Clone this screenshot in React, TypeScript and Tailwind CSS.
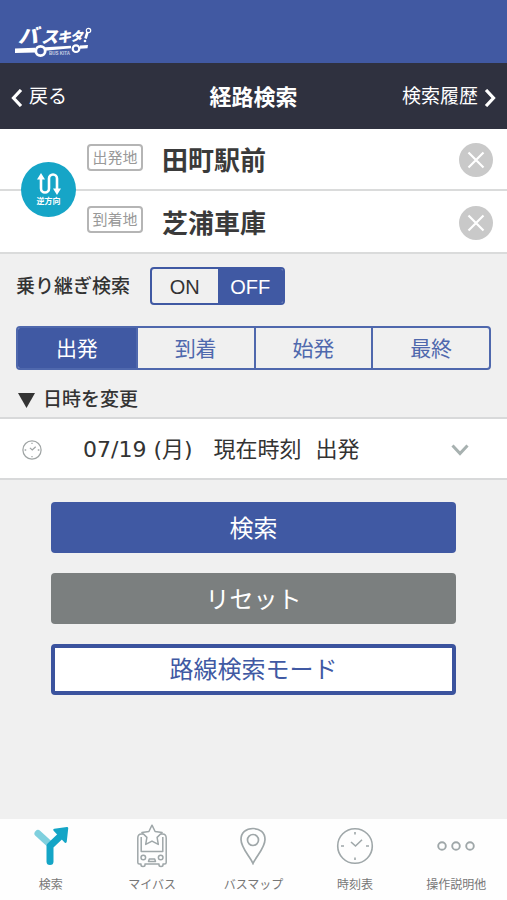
import { useState } from "react";
import type { ReactNode } from "react";

function Logo() {
  return (
    <svg width="78" height="48" viewBox="0 -14 78 48" className="text-white" role="img" aria-label="バスキタ! BUS KITA">
      <g fill="currentColor" fontStyle="italic" fontWeight="900" fontFamily="'Noto Sans CJK JP', sans-serif">
        <text x="3" y="14" fontSize="20">バ</text>
        <text x="26" y="14" fontSize="17">ス</text>
        <text x="42" y="13" fontSize="14">キ</text>
        <text x="55" y="12" fontSize="13">タ</text>
      </g>
      <path d="M70.500 9.500L72.500 3" stroke="currentColor" strokeWidth="2.600" />
      <circle cx="73.500" cy="1.500" r="2.200" fill="none" stroke="currentColor" strokeWidth="1.200" />
      <circle cx="70" cy="12" r="1.300" fill="currentColor" />
      <path d="M0 19.500l20-.8v4.800l-20 .4z M30 18.300l26-1.500v2.500l-26 2.400z M65 16.500l8-.5-.5 3.300-7.500.4z" fill="currentColor" />
      <circle cx="25.500" cy="22" r="4.700" fill="none" stroke="currentColor" strokeWidth="2.800" />
      <circle cx="61" cy="19.700" r="3.300" fill="none" stroke="currentColor" strokeWidth="2.200" />
      <text x="34" y="26" fontSize="4.500" fontWeight="700" fill="currentColor" opacity="0.700" fontFamily="'Liberation Sans', sans-serif">BUS KITA</text>
    </svg>
  );
}

function Chevron({ d }: { d: string }) {
  return (
    <svg width="12" height="18" viewBox="0 0 12 18" fill="none" stroke="currentColor" strokeWidth="3.200" aria-hidden="true">
      <path d={d} />
    </svg>
  );
}

function ClockFace({ size, stroke }: { size: number; stroke: number }) {
  return (
    <svg width={size} height={size} viewBox="0 0 38 38" fill="none" stroke="currentColor" strokeWidth={stroke} aria-hidden="true">
      <circle cx="19" cy="19" r="17.300" />
      <path d="M15 15l4.500 4 6.500-6.300M19 5v2.500M19 30.500V33M5 19h3M30 19h3" />
    </svg>
  );
}

function SearchIcon() {
  return (
    <svg width="36" height="40" viewBox="0 0 36 40" fill="none" aria-hidden="true">
      <path d="M5 7.500l11 10" stroke="#7fd0de" strokeWidth="7" strokeLinecap="round" />
      <path d="M17 35.500V20l10-9.500" stroke="#14a5c6" strokeWidth="7" strokeLinecap="round" strokeLinejoin="round" />
      <path d="M21.500 4l12.500-1.800-1.500 13.500z" fill="#14a5c6" stroke="#14a5c6" strokeWidth="2.500" strokeLinejoin="round" />
    </svg>
  );
}

function BusIcon() {
  return (
    <svg width="32" height="44" viewBox="0 0 32 44" fill="none" stroke="currentColor" strokeWidth="1.500" strokeLinejoin="round" aria-hidden="true">
      <path d="M8 10H5.500Q1.800 10 1.800 14v24.500q0 1.500 1.500 1.500H5v1q0 1.500 2 1.500t2-1.500v-1h14v1q0 1.500 2 1.500t2-1.500v-1h1.700q1.500 0 1.500-1.500V14q0-4-3.700-4H24" />
      <path d="M5.200 13v14.500h21.600V13" />
      <path d="M16 1.200l3.100 6.300 7 1-5 4.900 1.200 7L16 17.100l-6.300 3.300 1.200-7-5-4.900 7-1z" fill="white" />
      <circle cx="7.300" cy="33.500" r="2.300" />
      <circle cx="24.700" cy="33.500" r="2.300" />
      <path d="M13.300 35h5.400l.8 2.500h-7z" />
    </svg>
  );
}

function PinIcon() {
  return (
    <svg width="26" height="38" viewBox="0 0 26 38" fill="none" stroke="currentColor" strokeWidth="1.700" aria-hidden="true">
      <path d="M13 36.500C10 29.500 1 21 1 12.500 1 5.500 6 1.500 13 1.500s12 4 12 11c0 8.500-9 17-12 24z" />
      <circle cx="13" cy="13" r="5.500" />
    </svg>
  );
}

function MoreIcon() {
  return (
    <svg width="38" height="38" viewBox="0 0 38 38" fill="none" stroke="currentColor" strokeWidth="1.900" aria-hidden="true">
      <circle cx="5" cy="19" r="3.800" />
      <circle cx="19" cy="19" r="3.800" />
      <circle cx="33" cy="19" r="3.800" />
    </svg>
  );
}

function StopRow({ id, label, value, onChange }: { id: string; label: string; value: string; onChange: (v: string) => void }) {
  return (
    <div className="flex h-[62px] items-center border-b-2 border-[#dadbdb] bg-white pt-0.5 pr-[14px] pl-[87px] last-of-type:h-[63px]">
      <label htmlFor={id} className="mb-1.5 flex h-[27px] w-14 shrink-0 items-center justify-center rounded-[4px] border-2 border-[#b5b5b5] text-[15px] leading-none text-[#999999]">
        {label}
      </label>
      <input
        id={id}
        value={value}
        onChange={(e) => onChange(e.target.value)}
        className="ml-[19px] min-w-0 flex-1 bg-transparent pt-0.5 text-[26px] leading-[38px] font-bold text-[#3a3a3a] outline-none"
      />
      <button type="button" aria-label={`${label}をクリア`} onClick={() => onChange("")} className="flex size-[34px] items-center justify-center rounded-full bg-[#c9c9c9] text-white">
        <svg width="18" height="18" viewBox="0 0 18 18" stroke="currentColor" strokeWidth="2.200" aria-hidden="true">
          <path d="M1.500 1.500l15 15M16.500 1.500l-15 15" />
        </svg>
      </button>
    </div>
  );
}

const tabs = ["出発", "到着", "始発", "最終"];

const navItems: { label: string; icon: ReactNode }[] = [
  { label: "検索", icon: <SearchIcon /> },
  { label: "マイバス", icon: <BusIcon /> },
  { label: "バスマップ", icon: <PinIcon /> },
  { label: "時刻表", icon: <ClockFace size={38} stroke={1.6} /> },
  { label: "操作説明他", icon: <MoreIcon /> },
];

export default function App() {
  const [from, setFrom] = useState("田町駅前");
  const [to, setTo] = useState("芝浦車庫");
  const [transfer, setTransfer] = useState(false);
  const [tab, setTab] = useState("出発");

  return (
    <div className="flex min-h-screen flex-col bg-[#f0f0f0] font-['Liberation_Sans','Noto_Sans_CJK_JP',sans-serif] text-[#333333]" lang="ja">
      <div className="flex h-[63px] items-end bg-[#4159a2] pl-[15px]">
        <Logo />
      </div>
      <header className="grid h-[66px] grid-cols-3 items-center bg-[#2f313f] px-[11px] pt-[3px] text-[19px] text-white">
        <a href="#back" className="flex items-center gap-1.5">
          <Chevron d="M10 1L2.500 9l7.500 8" />
          戻る
        </a>
        <h1 className="text-center text-[22px] font-bold whitespace-nowrap">経路検索</h1>
        <a href="#history" className="flex items-center justify-end gap-1.5 whitespace-nowrap">
          検索履歴
          <Chevron d="M2 1l7.500 8L2 17" />
        </a>
      </header>

      <main className="flex-1">
        <div className="relative">
          <StopRow id="from" label="出発地" value={from} onChange={setFrom} />
          <StopRow id="to" label="到着地" value={to} onChange={setTo} />
          <button
            type="button"
            onClick={() => {
              setFrom(to);
              setTo(from);
            }}
            className="absolute top-[33px] left-[21px] flex size-[55px] flex-col items-center justify-center rounded-full bg-[#16a5c7] text-white"
          >
            <svg width="26" height="24" viewBox="0 0 26 24" fill="none" stroke="currentColor" strokeWidth="2.600" aria-hidden="true">
              <path d="M5 6v10.500a4 4 0 0 0 8 0V6.500a4 4 0 0 1 8 0V17" />
              <path d="M5 1l4 6.500H1zM21 23l4-6.500h-8z" fill="currentColor" stroke="none" />
            </svg>
            <span className="text-[8px] leading-3 font-bold">逆方向</span>
          </button>
        </div>

        <div className="px-4 pt-[13px]">
          <div className="flex items-center gap-5">
            <span className="pt-[3px] text-[19px] font-medium">乗り継ぎ検索</span>
            <div role="group" aria-label="乗り継ぎ検索" className="flex h-[38px] w-[135px] overflow-hidden rounded-[4px] border-2 border-[#4059a3] text-[20px]">
              <button type="button" aria-pressed={transfer} onClick={() => setTransfer(true)} className={`flex-1 pt-0.5 ${transfer ? "bg-[#4059a3] text-white" : ""}`}>
                ON
              </button>
              <button type="button" aria-pressed={!transfer} onClick={() => setTransfer(false)} className={`flex-1 pt-0.5 ${transfer ? "" : "bg-[#4059a3] text-white"}`}>
                OFF
              </button>
            </div>
          </div>

          <div role="group" aria-label="時刻の種類" className="mt-[21px] grid h-11 grid-cols-4 overflow-hidden rounded-[4px] border-2 border-[#4f68ad] text-[21px]">
            {tabs.map((t) => (
              <button
                key={t}
                type="button"
                aria-pressed={t === tab}
                onClick={() => setTab(t)}
                className={`border-[#4f68ad] pt-0.5 not-first:border-l-2 ${t === tab ? "bg-[#4059a3] text-white" : "text-[#4f68ad]"}`}
              >
                {t}
              </button>
            ))}
          </div>

          <h2 className="flex h-[47px] items-center gap-2 pt-[14px] pl-[2px] text-[19px] font-medium">
            <svg width="17" height="15" viewBox="0 0 17 15" fill="currentColor" aria-hidden="true">
              <path d="M0 0h17L8.500 15z" />
            </svg>
            日時を変更
          </h2>
        </div>

        <div className="flex h-[63px] items-center border-y-2 border-[#d8d9da] bg-white pt-0.5 pr-[38px] pl-[22px]">
          <span className="shrink-0 text-[#a0a5a5]">
            <ClockFace size={20} stroke={2.4} />
          </span>
          <select aria-label="日時" className="ml-[41px] min-w-0 flex-1 appearance-none bg-transparent font-['DejaVu_Sans','Noto_Sans_CJK_JP',sans-serif] text-[22px] outline-none">
            <option>{"07/19 (月)\u00a0\u00a0\u00a0現在時刻\u00a0\u00a0出発"}</option>
          </select>
          <svg width="18" height="12" viewBox="0 0 18 12" fill="none" stroke="#a7b1b0" strokeWidth="3" aria-hidden="true">
            <path d="M1.500 1.500L9 9.500l7.500-8" />
          </svg>
        </div>

        <div className="mx-auto flex w-4/5 flex-col gap-5 py-[22px] text-[24px]">
          <button type="button" className="h-[51px] rounded-[4px] bg-[#4059a3] pt-0.5 text-white">検索</button>
          <button type="button" className="h-[51px] rounded-[4px] bg-[#7b7f7f] pt-0.5 text-white">リセット</button>
          <button type="button" className="h-[51px] rounded-[4px] border-4 border-[#3b539e] bg-white text-[#4059a3]">路線検索モード</button>
        </div>
      </main>

      <nav className="grid h-[81px] grid-cols-5 bg-[#fefefe] text-[12px] text-[#777777]">
        {navItems.map((n) => (
          <a key={n.label} href={`#${n.label}`} className="flex flex-col items-center">
            <span className="flex h-[53px] items-center text-[#9fa7a9]">{n.icon}</span>
            <span className="pt-px leading-6 whitespace-nowrap">{n.label}</span>
          </a>
        ))}
      </nav>
    </div>
  );
}
